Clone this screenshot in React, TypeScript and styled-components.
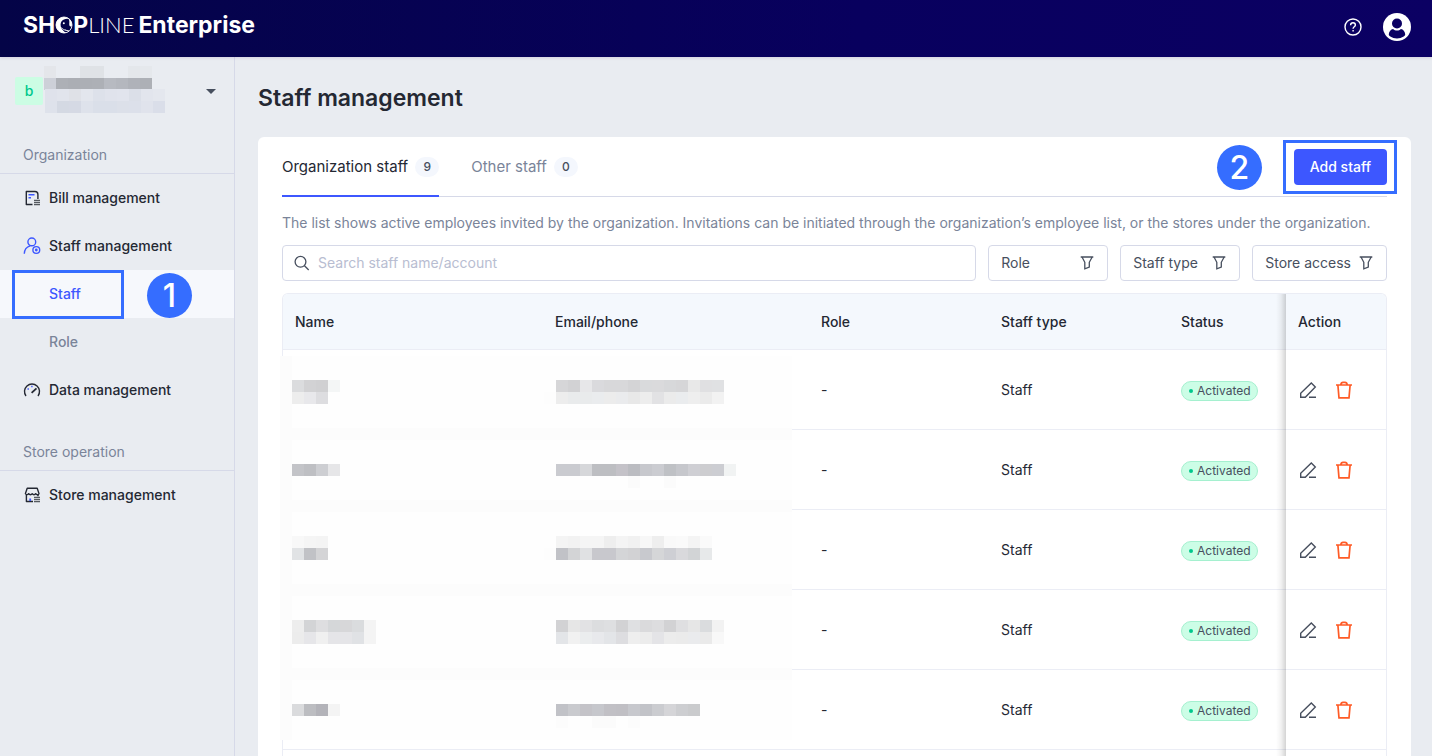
import React from "react";
import styled, { createGlobalStyle } from "styled-components";

const ink = "#242833";
const slate = "#474f5e";
const muted = "#7a8499";
const line = "#d6d9e8";
const faintLine = "#ebedf5";
const brand = "#3d57ff";
const mark = "#356dff";

const GlobalStyle = createGlobalStyle`
  *, *::before, *::after { box-sizing: border-box; }
  body {
    margin: 0;
    background: #e9ecf1;
    color: ${ink};
    font-family: Inter, "Liberation Sans", sans-serif;
    font-size: 14px;
    line-height: 20px;
  }
  button, input { font: inherit; color: inherit; }
  button { cursor: pointer; }
  a { color: inherit; text-decoration: none; }
  svg { display: block; flex: none; }
`;

const Shell = styled.div`
  height: 100vh;
  overflow: hidden;
  display: flex;
  flex-direction: column;
`;

const TopBar = styled.header`
  position: relative;
  flex: none;
  height: 57px;
  padding: 0 21px 0 23px;
  display: flex;
  align-items: center;
  justify-content: space-between;
  background: linear-gradient(90deg, #040447, #08005e 60%, #0b0063);
  color: #fff;
  box-shadow: 0 1px 3px rgba(60, 0, 90, 0.12);
`;

const Logo = styled.a`
  display: flex;
  align-items: center;
  padding-bottom: 8px;
  font-size: 23px;
  line-height: 28px;
  font-weight: 700;
  color: #fff;
`;

const LogoThin = styled.span`
  font-family: Lato, sans-serif;
  font-size: 22px;
  font-weight: 300;
  margin-right: 4px;
`;

const TopActions = styled.div`
  display: flex;
  align-items: center;
  gap: 21px;
  padding-bottom: 3px;
`;

const PlainButton = styled.button`
  display: flex;
  padding: 0;
  border: 0;
  background: none;
`;

const Body = styled.div`
  flex: 1;
  min-height: 0;
  display: flex;
`;

const Sidebar = styled.nav`
  flex: none;
  width: 235px;
  border-right: 1px solid ${line};
`;

const Switcher = styled.button`
  width: 100%;
  height: 80px;
  padding: 9px 18px 21px 15px;
  display: flex;
  align-items: center;
  border: 0;
  background: none;
`;

const StoreInitial = styled.span`
  width: 28px;
  height: 28px;
  border-radius: 2px;
  background: #ccfde4;
  color: #00c88c;
  font-weight: 500;
  line-height: 28px;
  text-align: center;
`;

const Caret = styled.span`
  margin-left: auto;
  border: 5px solid transparent;
  border-top-color: ${slate};
  border-bottom: 0;
`;

const SectionTitle = styled.h2<{ $spaced?: boolean }>`
  margin: ${(p) => (p.$spaced ? "20px" : "0")} 0 0;
  padding-left: 23px;
  border-bottom: 1px solid ${line};
  font-size: 14px;
  font-weight: 400;
  line-height: 36px;
  color: ${muted};
`;

const NavRow = styled.div<{ $active?: boolean }>`
  position: relative;
  background: ${(p) => (p.$active ? "#f6f8fc" : "transparent")};
`;

const NavLink = styled.a<{ $sub?: boolean; $active?: boolean }>`
  display: flex;
  align-items: center;
  gap: 8px;
  height: 48px;
  padding-left: ${(p) => (p.$sub ? "49px" : "23px")};
  font-weight: 500;
  color: ${(p) => (p.$active ? brand : p.$sub ? muted : ink)};
`;

const Highlight = styled.span`
  position: absolute;
  border: 3px solid ${mark};
  pointer-events: none;
`;

const StaffHighlight = styled(Highlight)`
  top: 0;
  left: 12px;
  width: 112px;
  height: 49px;
`;

const AddHighlight = styled(Highlight)`
  inset: -9px -10px -9px -11px;
`;

const Step = styled.span`
  position: absolute;
  width: 45px;
  height: 45px;
  border-radius: 50%;
  background: ${mark};
  color: #fff;
  font-size: 32px;
  font-weight: 500;
  line-height: 46px;
  text-align: center;
  pointer-events: none;
`;

const StaffStep = styled(Step)`
  top: 3px;
  left: 147px;
`;

const AddStep = styled(Step)`
  top: -4px;
  right: calc(100% + 32px);
`;

const Main = styled.main`
  flex: 1;
  min-width: 0;
  padding: 25px 21px 0 23px;
  display: flex;
  flex-direction: column;
`;

const PageTitle = styled.h1`
  margin: 0 0 23px;
  font-size: 23px;
  font-weight: 600;
  line-height: 32px;
`;

const Card = styled.section`
  flex: 1;
  padding: 0 24px;
  display: flex;
  flex-direction: column;
  border-radius: 6px 6px 0 0;
  background: #fff;
`;

const TabBar = styled.div`
  flex: none;
  height: 60px;
  display: flex;
  gap: 32px;
  border-bottom: 1px solid ${line};
`;

const Tab = styled.button<{ $active?: boolean }>`
  height: 60px;
  padding: 0;
  display: flex;
  align-items: center;
  gap: 7px;
  border: solid transparent;
  border-width: 2px 0;
  border-bottom-color: ${(p) => (p.$active ? brand : "transparent")};
  background: none;
  font-size: 15px;
  color: ${(p) => (p.$active ? ink : muted)};
`;

const Count = styled.span`
  min-width: 24px;
  border-radius: 10px;
  background: #f4f7fd;
  color: ${slate};
  font-size: 12px;
  font-weight: 500;
  line-height: 20px;
`;

const AddWrap = styled.div`
  position: relative;
  align-self: flex-start;
  margin: 12px 0 0 auto;
`;

const AddButton = styled.button`
  height: 36px;
  padding: 0 16px;
  border: 0;
  border-radius: 4px;
  background: ${brand};
  color: #fff;
  font-weight: 500;
  white-space: nowrap;
`;

const Note = styled.p`
  margin: 16px 0 12px;
  color: ${muted};
`;

const FilterBar = styled.div`
  display: flex;
  gap: 12px;
  margin-bottom: 12px;
`;

const SearchBox = styled.label`
  flex: 1;
  height: 36px;
  padding: 0 12px 0 11px;
  display: flex;
  align-items: center;
  gap: 8px;
  border: 1px solid ${line};
  border-radius: 4px;
`;

const SearchInput = styled.input`
  flex: 1;
  min-width: 0;
  padding: 0;
  border: 0;
  outline: 0;
  background: none;
  &::placeholder { color: #b8bdd1; opacity: 1; }
`;

const FilterButton = styled.button`
  min-width: 120px;
  height: 36px;
  padding: 0 12px;
  display: flex;
  align-items: center;
  justify-content: space-between;
  gap: 7px;
  border: 1px solid ${line};
  border-radius: 4px;
  background: #fff;
  color: ${slate};
  white-space: nowrap;
`;

const TableWrap = styled.div`
  position: relative;
  flex: 1;
  display: flex;
`;

const TableFrame = styled.div`
  position: relative;
  flex: 1;
  overflow: hidden;
  border: 1px solid ${faintLine};
  border-bottom: 0;
  border-radius: 6px 6px 0 0;
  &::after {
    content: "";
    position: absolute;
    top: 0;
    bottom: 0;
    right: 100px;
    width: 10px;
    background: linear-gradient(90deg, rgba(0, 0, 0, 0), rgba(0, 0, 0, 0.05) 50%, rgba(0, 0, 0, 0.17));
  }
`;

const Table = styled.table`
  width: 100%;
  table-layout: fixed;
  border-collapse: separate;
  border-spacing: 0;
`;

const Head = styled.th<{ $width?: number }>`
  width: ${(p) => (p.$width ? `${p.$width}px` : "auto")};
  height: 56px;
  padding: 0 12px;
  border-bottom: 1px solid ${faintLine};
  background: #f4f8fd;
  font-weight: 500;
  text-align: left;
`;

const Cell = styled.td`
  height: 80px;
  padding: 0 12px;
  border-bottom: 1px solid ${faintLine};
`;

const Status = styled.span`
  width: 77px;
  height: 20px;
  margin-top: 2px;
  padding: 0 7px;
  display: flex;
  align-items: center;
  gap: 4px;
  border: 1px solid #a5f0cf;
  border-radius: 10px;
  background: #ccfde6;
  color: ${slate};
  font-size: 12px;
  line-height: 18px;
  &::before {
    content: "";
    flex: none;
    width: 4px;
    height: 4px;
    border-radius: 50%;
    background: #00c88c;
  }
`;

const RowActions = styled.div`
  display: flex;
  gap: 18px;
  padding-left: 1px;
`;

const Redaction = styled.svg`
  position: absolute;
  top: 63px;
  left: -2px;
`;

/* Each run is: column, row, then one colour per 12px block. */
type Run = [number, number, string];

const tableRuns: Run[] = [
  [1, 2, "dbdcde d2d2d4 d0d0d2 f4f6f6"],
  [1, 3, "ededed e8e8eb dddde0"],
  [1, 9, "c3c4c8 bebfc3 cdced2 e6e6e8"],
  [1, 15, "f8f8f8 f5f5f5 f4f4f4"],
  [1, 16, "e1e3e5 c1c2c6 d4d4d6"],
  [1, 22, "ededed d3d4d6 dedee0 d5d7d9 d7d7d9 dadcde f4f4f4"],
  [1, 23, "ececec e6e6e9 f0f0f0 e5e5e8 e5e5e8 e0e2e5 f4f4f4"],
  [1, 29, "dadbdd bcbdc1 b3b3b9 f4f4f4"],
  [23, 2, "d6d6d8 d2d2d4 e7e7e9 dadadd d8d8da d8d8da d4d4d6 d9dadc dadadc d7d8da d6d6d8 e8e8e8 e0e0e2 e0e1e3"],
  [22, 3, "fdfdfd ededed e9ebec e9ebec eaecee ececec eaebed e8e8e8 ededed e2e2e4 ebebeb eaecee eeeeee ebebeb f2f2f2"],
  [23, 9, "cacbd0 cacbd0 d6d7da bdbec2 bdbec2 c4c2c8 bbbcc1 c7c8cd cbccd1 bfc1c5 c6c7cc cfcfd4 cdcdd0 cccdd2 f1f3f3"],
  [29, 10, "fbfbfb fefefe fefefe fbfbfb"],
  [23, 15, "f4f4f4 f2f2f2 f5f5f5 f5f5f5 eeeeee f4f4f4 f1f1f1 f7f7f7 eeeeee f9f9f9 fafafa f4f4f4 fafafa"],
  [22, 16, "fdfdfd c1c2c7 d3d4d6 e0e1e3 c8c8cd c8c8cd d4d5d7 d2d2d4 c8c9ce d5d6d8 cecfd4 d9d9dc d2d4d6 e7e9ea"],
  [23, 22, "d2d2d4 e6e6e6 e2e2e4 dcdddf dedfe1 d2d2d4 dfe0e2 dadadc dddddf d2d2d4 dfdfe1 e6e6e6 dadcde f2f2f2"],
  [23, 23, "e3e5e8 f1f1f1 ebedee e8e9ec e3e5e8 dddde0 eeeeee ececec e4e4e7 ececec ebebeb eaebed eaeaea f8f8f8"],
  [23, 29, "c1c2c7 c9cace c4c3c8 c6c7cc c1c0c5 c0bfc4 c7c8cd c2c3c8 cbccd0 d5d5d8 cdced1 cacbcd"],
  [23, 30, "fcfcfc fefefe fefefe fbfbfb fbfbfb fefefe fcfcfc"],
];

const bandRows = [6, 12, 19, 26];

function Blocks({ runs, x = 0, y = 0 }: { runs: Run[]; x?: number; y?: number }) {
  return (
    <g transform={`translate(${x} ${y})`} shapeRendering="crispEdges">
      {runs.map(([col, row, colors]) =>
        colors.split(" ").map((c, i) => (
          <rect key={`${col}-${row}-${i}`} x={(col + i) * 12} y={row * 12} width="12" height="12" fill={`#${c}`} />
        ))
      )}
    </g>
  );
}

function TableRedaction() {
  return (
    <Redaction width="512" height="384" aria-hidden="true">
      <rect width="512" height="384" fill="#fefefe" />
      <rect width="12" height="384" fill="#fcfcfc" />
      {bandRows.map((r) => (
        <rect key={r} y={r * 12} width="512" height="12" fill="#fcfcfc" />
      ))}
      <Blocks runs={tableRuns} />
    </Redaction>
  );
}

function StoreRedaction() {
  return (
    <svg width="128" height="50" aria-hidden="true">
      <Blocks x={1} runs={[
        [0, 0, "e4e6ea e9ecf1 e9ecf1 dfe2e6 dfe2e6 e9ecf1 e9ecf1 e4e7eb e5e8ec"],
        [0, 1, "cdd0d8 adb0b6 abaeb4 acafb5 adb0b6 b7bac1 b4b7be afb2b9 adb0b6"],
      ]} />
      <Blocks x={2} y={-1} runs={[
        [0, 2, "dfe2eb e1e4ec dfe1e7 e3e6ed dde1ea e0e3ec e1e4ed dbdfe8 e2e5ed e4e7ee"],
        [0, 3, "dee2eb d4d9e3 d5d9e4 dee2eb dadfe9 dadfe9 dce0e9 dce0ea e0e3ec dadee9"],
      ]} />
    </svg>
  );
}

function Whale() {
  return (
    <svg width="18" height="18" viewBox="0 0 18 18" fill="none" aria-hidden="true">
      <circle cx="9" cy="9" r="8" stroke="#fff" strokeWidth="0.9" />
      <path d="M1 9C1 4.800 4.500 1 9 1c2.200 0 4 .7 5.400 2-3-.9-6.300.2-7.800 2.300C5.300 7.200 5.200 10 6.500 12.200c1 1.800 2.700 3.500 4.700 4.500C5.500 17.900 1 13.800 1 9Z" fill="#fff" />
      <path d="M13.200 2.200c2.400 1.400 4.200 4.300 3.700 7.600-.9 1-2.100.7-2.500-.4-.5-1.800.8-4.400-1.200-7.200Z" fill="#fff" />
      <path d="M6.500 11.500c1.800 2.500 4 3.300 7.300 3M9.500 13.500l4.500 2" stroke="#fff" strokeWidth="0.7" />
      <circle cx="8.800" cy="7.300" r="1" fill="#fff" />
    </svg>
  );
}

const HelpIcon = () => (
  <svg width="18" height="18" viewBox="0 0 18 18" fill="none" stroke="#fff" strokeWidth="1.400" aria-hidden="true">
    <circle cx="9" cy="9" r="8" />
    <path d="M6.600 7.200C6.600 5.700 7.600 4.800 9 4.800s2.400.9 2.400 2.200c0 1.700-2.300 1.800-2.300 3.500v.3" />
    <path d="M9.100 11.900v1.500" />
  </svg>
);

const AvatarIcon = () => (
  <svg width="28" height="28" viewBox="0 0 28 28" aria-hidden="true">
    <circle cx="14" cy="14" r="14" fill="#fff" />
    <circle cx="14" cy="10.500" r="5" fill="#0b0063" />
    <path d="M5.800 21.300c.3-3 2-5.100 4.300-5.400 1.100 1 2.400 1.500 3.900 1.500s2.800-.5 3.900-1.500c2.300.3 4 2.400 4.300 5.400.1 1-.6 1.700-1.500 2.300A12.500 12.500 0 0 1 14 25.600c-2.600 0-4.700-.7-6.700-2-.9-.6-1.600-1.300-1.500-2.300Z" fill="#0b0063" />
  </svg>
);

const NavSvg = styled.svg.attrs({ width: 18, height: 18, viewBox: "0 0 18 18", fill: "none", "aria-hidden": true })`
  stroke: ${ink};
  stroke-width: 1.4px;
  stroke-linejoin: round;
`;

const BillIcon = () => (
  <NavSvg>
    <path d="M9.500 15.500H3.300V2.500H12c1.900 0 2.900 1.100 2.900 3V10" />
    <path d="M11 11.300h6M11 13.300h6M11 15.500h6" stroke="#55595f" strokeWidth="1.300" />
    <path d="M5.500 5.700h6M5.500 8.700H8" stroke={brand} />
  </NavSvg>
);

const StaffIcon = () => (
  <NavSvg>
    <g stroke={brand}>
      <circle cx="8.800" cy="4.900" r="3.900" />
      <path d="M1.300 16.800c.1-4.400 2.300-7 5.900-8" />
      <circle cx="13.300" cy="13" r="3.400" />
      <circle cx="13.300" cy="13" r="0.700" />
    </g>
  </NavSvg>
);

const DataIcon = () => (
  <NavSvg>
    <path d="M3 15a7.500 7.500 0 1 1 12 0" />
    <path d="M8.600 11.900 13.500 7.300" strokeWidth="1.800" />
    <path d="M4.500 8h1.400M8.200 5.500h1.400" stroke={brand} />
  </NavSvg>
);

const StoreIcon = () => (
  <NavSvg>
    <path d="M4.200 2.200h10L16 7.600c-.3 1.300-2.300 1.600-3.300.1-.9 1.400-2.500 1.400-3.500 0-.9 1.400-2.600 1.400-3.500 0C4.800 9.100 2.800 8.800 2.400 7.600Z" />
    <path d="M3.400 9v6.500H10M15 8.700v1.500" />
    <path d="M11 11.300h6M11 13.300h6M11 15.500h6" stroke="#55595f" strokeWidth="1.300" />
    <path d="M7.200 12.500v2.500" stroke={brand} strokeWidth="1.800" />
  </NavSvg>
);

const SearchIcon = () => (
  <svg width="16" height="16" viewBox="0 0 16 16" fill="none" stroke={slate} strokeWidth="1.300" aria-hidden="true">
    <circle cx="6.500" cy="6.800" r="5.400" />
    <path d="m10.500 10.800 4.200 4.200" />
  </svg>
);

const FunnelIcon = () => (
  <svg width="16" height="16" viewBox="0 0 16 16" fill="none" stroke={slate} strokeWidth="1.300" aria-hidden="true">
    <path d="M1.700 2h12.600M3 2l2.800 5.300v6.500l4.500-1.700V7.300L13.200 2" />
  </svg>
);

const PencilIcon = () => (
  <svg width="18" height="18" viewBox="0 0 18 18" fill="none" stroke={slate} strokeWidth="1.400" aria-hidden="true">
    <path d="m12.300 1.900 4 4L6.300 16.200H1.700v-3.900ZM10 16.300h7" />
  </svg>
);

const TrashIcon = () => (
  <svg width="18" height="18" viewBox="0 0 18 18" fill="none" stroke="#ff5b26" strokeWidth="1.700" aria-hidden="true">
    <path d="M1 4h16M5.800 3.700C6 2.200 6.600 1.400 8 1.400h2c1.400 0 2 .8 2.200 2.300M2.900 4.300 4 16.900h10l1.100-12.600" />
  </svg>
);

const staffRows = [1, 2, 3, 4, 5];

export default function App() {
  return (
    <Shell>
      <GlobalStyle />
      <TopBar>
        <Logo href="#">
          <span>SH</span>
          <Whale />
          <span>P</span>
          <LogoThin>LINE</LogoThin>
          <span>Enterprise</span>
        </Logo>
        <TopActions>
          <PlainButton aria-label="Help"><HelpIcon /></PlainButton>
          <PlainButton aria-label="Account"><AvatarIcon /></PlainButton>
        </TopActions>
      </TopBar>
      <Body>
        <Sidebar>
          <Switcher aria-label="Switch store">
            <StoreInitial>b</StoreInitial>
            <StoreRedaction />
            <Caret />
          </Switcher>
          <SectionTitle>Organization</SectionTitle>
          <NavRow><NavLink href="#"><BillIcon />Bill management</NavLink></NavRow>
          <NavRow><NavLink href="#"><StaffIcon />Staff management</NavLink></NavRow>
          <NavRow $active>
            <NavLink href="#" $sub $active>Staff</NavLink>
            <StaffHighlight />
            <StaffStep>1</StaffStep>
          </NavRow>
          <NavRow><NavLink href="#" $sub>Role</NavLink></NavRow>
          <NavRow><NavLink href="#"><DataIcon />Data management</NavLink></NavRow>
          <SectionTitle $spaced>Store operation</SectionTitle>
          <NavRow><NavLink href="#"><StoreIcon />Store management</NavLink></NavRow>
        </Sidebar>
        <Main>
          <PageTitle>Staff management</PageTitle>
          <Card>
            <TabBar>
              <Tab $active>Organization staff<Count>9</Count></Tab>
              <Tab>Other staff<Count>0</Count></Tab>
              <AddWrap>
                <AddButton>Add staff</AddButton>
                <AddHighlight />
                <AddStep>2</AddStep>
              </AddWrap>
            </TabBar>
            <Note>
              The list shows active employees invited by the organization. Invitations can be initiated through the
              organization’s employee list, or the stores under the organization.
            </Note>
            <FilterBar>
              <SearchBox>
                <SearchIcon />
                <SearchInput aria-label="Search staff" placeholder="Search staff name/account" />
              </SearchBox>
              <FilterButton>Role<FunnelIcon /></FilterButton>
              <FilterButton>Staff type<FunnelIcon /></FilterButton>
              <FilterButton>Store access<FunnelIcon /></FilterButton>
            </FilterBar>
            <TableWrap>
              <TableFrame>
                <Table>
                  <thead>
                    <tr>
                      <Head $width={260}>Name</Head>
                      <Head $width={266}>Email/phone</Head>
                      <Head $width={180}>Role</Head>
                      <Head $width={180}>Staff type</Head>
                      <Head>Status</Head>
                      <Head $width={100}>Action</Head>
                    </tr>
                  </thead>
                  <tbody>
                    {staffRows.map((id) => (
                      <tr key={id}>
                        <Cell />
                        <Cell />
                        <Cell>-</Cell>
                        <Cell>Staff</Cell>
                        <Cell><Status>Activated</Status></Cell>
                        <Cell>
                          <RowActions>
                            <PlainButton aria-label="Edit"><PencilIcon /></PlainButton>
                            <PlainButton aria-label="Delete"><TrashIcon /></PlainButton>
                          </RowActions>
                        </Cell>
                      </tr>
                    ))}
                  </tbody>
                </Table>
              </TableFrame>
              <TableRedaction />
            </TableWrap>
          </Card>
        </Main>
      </Body>
    </Shell>
  );
}
